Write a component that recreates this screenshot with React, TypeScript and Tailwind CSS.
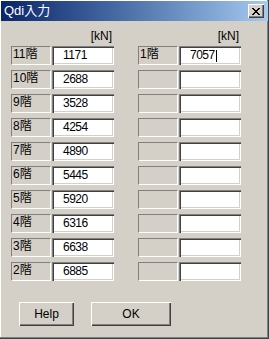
const LEFT = [
  { floor: '11階', value: '1171' },
  { floor: '10階', value: '2688' },
  { floor: '9階', value: '3528' },
  { floor: '8階', value: '4254' },
  { floor: '7階', value: '4890' },
  { floor: '6階', value: '5445' },
  { floor: '5階', value: '5920' },
  { floor: '4階', value: '6316' },
  { floor: '3階', value: '6638' },
  { floor: '2階', value: '6885' },
];

const RIGHT = [
  { floor: '1階', value: '7057' },
  { floor: '', value: '' },
  { floor: '', value: '' },
  { floor: '', value: '' },
  { floor: '', value: '' },
  { floor: '', value: '' },
  { floor: '', value: '' },
  { floor: '', value: '' },
  { floor: '', value: '' },
  { floor: '', value: '' },
];

const FONT = "font-['Liberation_Sans','Noto_Sans_CJK_JP',sans-serif]";

function Row({ floor, value, cursor }: { floor: string; value: string; cursor?: boolean }) {
  return (
    <div className="flex h-[19px] gap-[1px]">
      {/* static label */}
      <div className="w-[40px] h-full border-t border-l border-[#808080] border-r-white border-b-white border-r border-b pl-[1px] text-[12px] leading-[15px] text-black">
        {floor}
      </div>
      {/* sunken edit box */}
      <div className="w-[62px] h-full bg-white shadow-[inset_1px_1px_#808080,inset_2px_2px_#404040,inset_-1px_-1px_#ffffff,inset_-2px_-2px_#d4d0c8] pl-[11px] text-[12px] leading-[19px] tracking-[-0.5px] text-black flex items-center">
        <span>{value}</span>
        {cursor && <span className="w-[1px] h-[12px] bg-black ml-[1px]" />}
      </div>
    </div>
  );
}

function Column({ rows, withCursor }: { rows: typeof LEFT; withCursor?: boolean }) {
  return (
    <div className="flex flex-col w-[103px]">
      <div className="h-[15px] mb-[2px] text-right pr-[2px] text-[12px] leading-[15px] text-black">[kN]</div>
      <div className="flex flex-col gap-[5px]">
        {rows.map((r, i) => (
          <Row key={i} floor={r.floor} value={r.value} cursor={withCursor && i === 0} />
        ))}
      </div>
    </div>
  );
}

function Button({ label, width }: { label: string; width: string }) {
  return (
    <div
      className={`${width} h-[24px] flex items-center justify-center text-[12px] text-black bg-[#d4d0c8] shadow-[inset_1px_1px_#ffffff,inset_-1px_-1px_#404040,inset_-2px_-2px_#808080]`}>
      {label}
    </div>
  );
}

export default function App() {
  return (
    <div
      className={`${FONT} w-[269px] h-[339px] bg-[#d4d0c8] flex flex-col p-[1px] shadow-[inset_-1px_-1px_#404040,inset_-2px_-2px_#808080,inset_1px_1px_#ffffff]`}>
      {/* Title bar */}
      <div className="h-[20px] flex items-center justify-between bg-linear-to-r from-[#0a246a] to-[#a6caf0] pl-[3px] pr-[4px]">
        <span className="text-white text-[13px] leading-[20px]">Qdi入力</span>
        <div className="w-[16px] h-[14px] bg-[#d4d0c8] flex items-center justify-center shadow-[inset_1px_1px_#ffffff,inset_-1px_-1px_#404040,inset_-2px_-2px_#808080]">
          <svg width="8" height="7" viewBox="0 0 8 7" shapeRendering="crispEdges">
            <path d="M0 0h2v1H0zM6 0h2v1H6zM1 1h2v1H1zM5 1h2v1H5zM2 2h4v1H2zM3 3h2v1H3zM2 4h4v1H2zM1 5h2v1H1zM5 5h2v1H5zM0 6h2v1H0zM6 6h2v1H6z" fill="#000" />
          </svg>
        </div>
      </div>

      {/* Body */}
      <div className="flex flex-col pl-[10px] pt-[8px]">
        <div className="flex gap-[24px]">
          <Column rows={LEFT} />
          <Column rows={RIGHT} withCursor />
        </div>
        <div className="flex gap-[17px] mt-[21px] pl-[8px]">
          <Button label="Help" width="w-[55px]" />
          <Button label="OK" width="w-[80px]" />
        </div>
      </div>
    </div>
  );
}
